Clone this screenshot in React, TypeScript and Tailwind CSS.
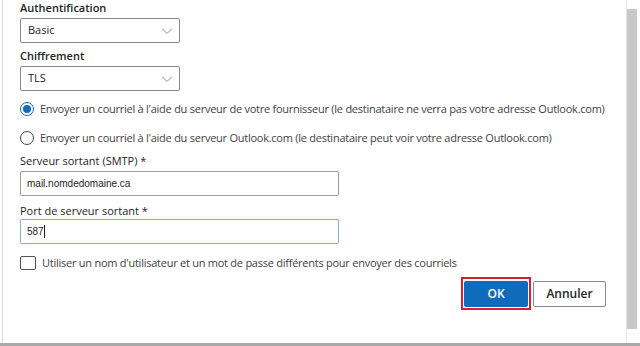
import React from 'react';

const font = { fontFamily: '"Open Sans", "Noto Sans", sans-serif' };

const Chevron: React.FC = () => (
  <svg width="12" height="8" viewBox="0 0 12 8" className="text-[#8a8a8a]">
    <path d="M1 1.5l5 5 5-5" fill="none" stroke="currentColor" strokeWidth="1" />
  </svg>
);

const Label: React.FC<{ children: React.ReactNode; className?: string }> = ({ children, className = '' }) => (
  <div className={`h-[16px] leading-[16px] text-[11px] text-[#242424] ${className}`}>{children}</div>
);

const Dropdown: React.FC<{ value: string }> = ({ value }) => (
  <div className="w-[160px] h-[25px] border border-[#8a8a8a] rounded-[2px] flex items-center justify-between pl-[7px] pr-[6px]">
    <span className="text-[11px] text-[#242424]">{value}</span>
    <Chevron />
  </div>
);

const Radio: React.FC<{ checked?: boolean; children: React.ReactNode; className?: string }> = ({ checked = false, children, className = '' }) => (
  <div className={`h-[16px] flex items-center gap-[6px] ${className}`}>
    <span className={`w-[14px] h-[14px] rounded-full border flex items-center justify-center ${checked ? 'border-[#0f6cbd]' : 'border-[#444]'}`}>
      {checked && <span className="w-[8px] h-[8px] rounded-full bg-[#0f6cbd]" />}
    </span>
    <span className="text-[11px] text-[#424242] tracking-[-0.25px]">{children}</span>
  </div>
);

const TextInput: React.FC<{ value: string; focused?: boolean; caret?: boolean }> = ({ value, focused = false, caret = false }) => (
  <div className={`w-[319px] h-[25px] border rounded-[2px] flex items-center pl-[6px] ${focused ? 'border-[#7fb6bf]' : 'border-[#9a9a9a]'}`}>
    <span className="text-[10px] text-[#242424]" style={{ fontFamily: '"Liberation Sans", Arial, sans-serif' }}>{value}</span>
    {caret && <span className="w-px h-[13px] bg-[#242424]" />}
  </div>
);

export default function App() {
  return (
    <div className="w-[640px] h-[346px] bg-white flex flex-col overflow-hidden" style={font}>
      <div className="flex-1 flex border-l border-[#dcdcdc] ml-[2px]">
        <div className="flex-1 pl-[17px] flex flex-col">
          <Label className="font-semibold">Authentification</Label>
          <div className="mt-[2px]"><Dropdown value="Basic" /></div>
          <Label className="font-semibold mt-[5px]">Chiffrement</Label>
          <div className="mt-[2px]"><Dropdown value="TLS" /></div>
          <Radio checked className="mt-[10px]">
            Envoyer un courriel à l'aide du serveur de votre fournisseur (le destinataire ne verra pas votre adresse Outlook.com)
          </Radio>
          <Radio className="mt-[13px]">
            Envoyer un courriel à l'aide du serveur Outlook.com (le destinataire peut voir votre adresse Outlook.com)
          </Radio>
          <Label className="mt-[7px]">Serveur sortant (SMTP) *</Label>
          <div className="mt-[2px]"><TextInput value="mail.nomdedomaine.ca" /></div>
          <Label className="mt-[7px]">Port de serveur sortant *</Label>
          <div className="mt-[0px]"><TextInput value="587" focused caret /></div>
          <div className="mt-[11px] h-[16px] flex items-center gap-[6px]">
            <span className="w-[16px] h-[14px] border border-[#555] rounded-[2px]" />
            <span className="text-[11px] text-[#424242] tracking-[-0.25px]">
              Utiliser un nom d'utilisateur et un mot de passe différents pour envoyer des courriels
            </span>
          </div>
          <div className="mt-[6px] flex justify-end items-center gap-[2px] pr-[20px]">
            <div className="border-2 border-[#d7202a] p-px">
              <button className="w-[64px] h-[26px] bg-[#0f6cbd] rounded-[2px] text-white text-[12px] font-semibold">OK</button>
            </div>
            <button className="w-[73px] h-[26px] bg-white border border-[#8a8a8a] rounded-[2px] text-[#242424] text-[12px] font-semibold">Annuler</button>
          </div>
        </div>
        <div className="w-[14px] flex flex-col pt-[9px] pb-[14px] border-l border-[#e6e6e6]">
          <div className="flex-1 w-[10px] bg-[#c8c8c8]" />
        </div>
      </div>
      <div className="h-[3px] bg-[#a9a9a9]" />
    </div>
  );
}
